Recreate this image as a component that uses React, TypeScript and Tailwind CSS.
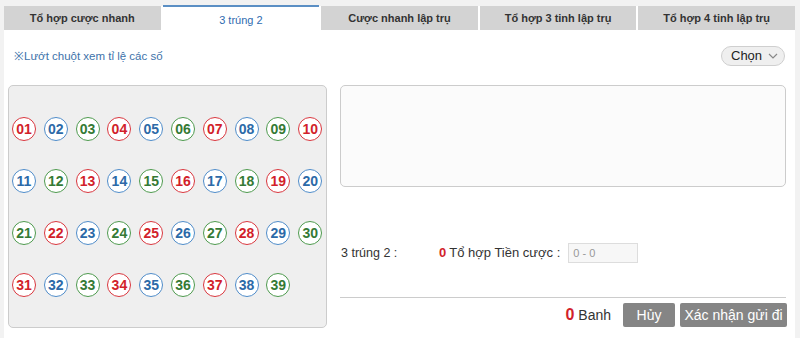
import React from "react";

const tabs = ["Tổ hợp cược nhanh", "3 trúng 2", "Cược nhanh lập trụ", "Tổ hợp 3 tinh lập trụ", "Tổ hợp 4 tinh lập trụ"];

function Ball({ n }: { n: number }) {
  const m = (n - 1) % 3;
  const cls =
    m === 0
      ? "border-[#d9363e] text-[#d21f2b]"
      : m === 1
      ? "border-[#4f8cc9] text-[#2c6aa8]"
      : "border-[#4e9a4e] text-[#357a35]";
  return (
    <div
      className={`w-[24px] h-[24px] rounded-full border bg-white flex items-center justify-center text-[14px] font-bold leading-none ${cls}`}
    >
      {String(n).padStart(2, "0")}
    </div>
  );
}

export default function App() {
  const nums = Array.from({ length: 39 }, (_, i) => i + 1);
  return (
    <div
      className="w-[800px] h-[338px] bg-[#f2f2f2] pt-[6px] pl-[4px] pr-[5px] overflow-hidden"
      style={{ fontFamily: '"Liberation Sans", Arial, sans-serif' }}
    >
      <div className="bg-white h-[332px]">
        <div className="flex gap-[2px] h-[24px]">
          {tabs.map((t, i) =>
            i === 1 ? (
              <div
                key={t}
                className="flex-1 bg-white border-t-2 border-[#5b8fc4] -mt-[1px] h-[25px] flex items-center justify-center pt-[3px] text-[11px] text-[#2f6bb0]"
              >
                {t}
              </div>
            ) : (
              <div
                key={t}
                className="flex-1 bg-[#d3d3d3] flex items-center justify-center text-[11px] font-bold text-[#333]"
              >
                {t}
              </div>
            )
          )}
        </div>
        <div className="flex items-center justify-between h-[55px] pl-[10px] pr-[10px] pb-[2px]">
          <div className="text-[11.5px] text-[#3d72aa]">※Lướt chuột xem tỉ lệ các số</div>
          <div className="w-[64px] h-[20px] rounded-full border border-[#cfcfcf] bg-[#efefef] flex items-center pl-[9px] pr-[6px] justify-between mt-[-2px]">
            <span className="text-[13px] text-[#222]">Chọn</span>
            <svg width="10" height="6" viewBox="0 0 10 6">
              <path d="M1 1 L5 5 L9 1" fill="none" stroke="#888" strokeWidth="1.2" />
            </svg>
          </div>
        </div>
        <div className="flex pl-[4px] pr-[9px] gap-[13px]">
          <div className="w-[319px] h-[243px] bg-[#efefef] border border-[#cccccc] rounded-[5px] pt-[31px] pl-[3px]">
            <div className="flex flex-wrap gap-x-[7.8px] gap-y-[28px] w-[314px]">
              {nums.map((n) => (
                <Ball key={n} n={n} />
              ))}
            </div>
          </div>
          <div className="flex-1 flex flex-col">
            <div className="h-[102px] border border-[#cccccc] rounded-[5px] bg-[#fbfbfb]" />
            <div className="flex items-center h-[20px] mt-[56px] text-[13px] text-[#333]">
              <span className="pl-[1px] w-[99px] text-[12.5px]">3 trúng 2 :</span>
              <span className="text-[#d21f2b] font-bold mr-[3px]">0</span>
              <span>Tổ hợp Tiền cược :</span>
              <div className="ml-[8px] w-[70px] h-[20px] border border-[#dddddd] bg-[#f7f7f7] text-[11px] text-[#999] flex items-center pl-[4px]">
                0 - 0
              </div>
            </div>
            <div className="mt-[34px] border-t border-[#cccccc]" />
            <div className="flex justify-end items-center mt-[5px] h-[24px]">
              <span className="text-[16px] font-bold text-[#d21f2b] mr-[4px]">0</span>
              <span className="text-[14px] text-[#333] mr-[12px]">Banh</span>
              <div className="w-[52px] h-[24px] bg-[#858585] text-white text-[14px] flex items-center justify-center rounded-[2px] mr-[5px]">
                Hủy
              </div>
              <div className="w-[107px] h-[24px] bg-[#858585] text-white text-[14px] flex items-center justify-center rounded-[2px] mr-[-1px]">
                Xác nhận gửi đi
              </div>
            </div>
          </div>
        </div>
      </div>
    </div>
  );
}
